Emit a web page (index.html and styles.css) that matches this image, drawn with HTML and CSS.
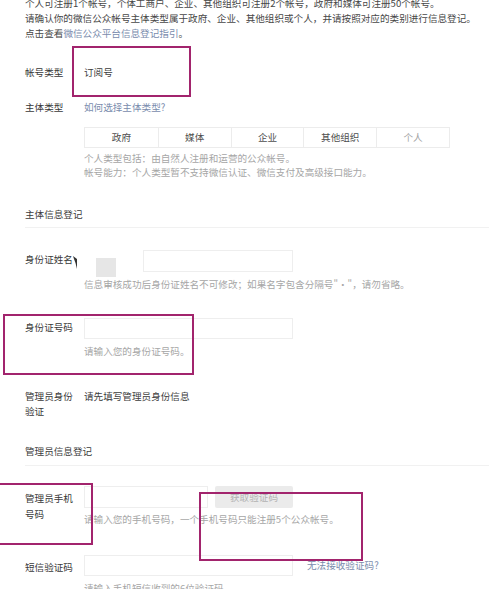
FILE: index.html
```html
<!DOCTYPE html>
<html lang="zh-CN">
<head>
<meta charset="utf-8">
<title>信息登记</title>
<link rel="stylesheet" href="styles.css">
</head>
<body>
<div class="page">
  <div class="intro">
    <p>个人可注册1个帐号，个体工商户、企业、其他组织可注册2个帐号，政府和媒体可注册50个帐号。</p>
    <p>请确认你的微信公众帐号主体类型属于政府、企业、其他组织或个人，并请按照对应的类别进行信息登记。</p>
    <p>点击查看<span class="link">微信公众平台信息登记指引</span>。</p>
  </div>

  <div class="row row-type">
    <div class="label">帐号类型</div>
    <div class="value">订阅号</div>
  </div>

  <div class="row row-subject">
    <div class="label">主体类型</div>
    <div class="field">
      <div class="value"><span class="link">如何选择主体类型?</span></div>
      <div class="tabs">
        <div class="tab">政府</div>
        <div class="tab">媒体</div>
        <div class="tab">企业</div>
        <div class="tab">其他组织</div>
        <div class="tab tab-light">个人</div>
      </div>
      <div class="hints">
        <div class="hint">个人类型包括：由自然人注册和运营的公众帐号。</div>
        <div class="hint">帐号能力：个人类型暂不支持微信认证、微信支付及高级接口能力。</div>
      </div>
    </div>
  </div>

  <div class="section-title title-1">主体信息登记</div>

  <div class="row row-name">
    <div class="label label-input">身份证姓名</div>
    <div class="field">
      <div class="input input-short"></div>
      <div class="hint hint-after">信息审核成功后身份证姓名不可修改；如果名字包含分隔号"·"，请勿省略。</div>
    </div>
  </div>

  <div class="row row-id">
    <div class="label label-input">身份证号码</div>
    <div class="field">
      <div class="input input-21"></div>
      <div class="hint hint-after">请输入您的身份证号码。</div>
    </div>
  </div>

  <div class="row row-verify">
    <div class="label">管理员身份<br>验证</div>
    <div class="value">请先填写管理员身份信息</div>
  </div>

  <div class="section-title title-2">管理员信息登记</div>

  <div class="row row-phone">
    <div class="label label-input2">管理员手机<br>号码</div>
    <div class="field">
      <div class="phone-line">
        <div class="input input-phone"></div>
        <div class="btn">获取验证码</div>
      </div>
      <div class="hint hint-after2">请输入您的手机号码，一个手机号码只能注册5个公众帐号。</div>
    </div>
  </div>

  <div class="row row-sms">
    <div class="label label-input2">短信验证码</div>
    <div class="field">
      <div class="sms-line">
        <div class="input input-21"></div>
        <span class="link sms-link">无法接收验证码?</span>
      </div>
      <div class="hint hint-after">请输入手机短信收到的6位验证码</div>
    </div>
  </div>
</div>

<div class="grey-square"></div>
<svg class="cursor-mark" width="6" height="14" viewBox="0 0 6 14"><polygon points="0,0 4,3 4,13 2.5,7 1,3" fill="#333"/></svg>

<div class="mark mark-1"></div>
<div class="mark mark-2"></div>
<div class="mark mark-3"></div>
<div class="mark mark-4"></div>
</body>
</html>
```

FILE: styles.css
```css
html, body {
  margin: 0;
  padding: 0;
  background: #ffffff;
}

body {
  font-family: "Noto Sans CJK SC", "Noto Sans", sans-serif;
  font-size: 9.6px;
  color: #3c3c3c;
  width: 489px;
  height: 589px;
  overflow: hidden;
  position: relative;
}

.page {
  padding-left: 25px;
}

.intro {
  margin-top: -4.5px;
  color: #474747;
}

.intro p {
  margin: 0;
  line-height: 15px;
  white-space: nowrap;
}

.link {
  color: #7a8cad;
}

.row {
  display: grid;
  grid-template-columns: 59px 1fr;
  align-items: start;
}

.label {
  line-height: 15px;
  color: #383838;
  white-space: nowrap;
}

.value {
  line-height: 15px;
  color: #3c3c3c;
  white-space: nowrap;
}

.row-type {
  margin-top: 24px;
}

.row-subject {
  margin-top: 20px;
}

.tabs {
  margin-top: 12px;
  width: 366px;
  height: 21px;
  box-sizing: border-box;
  border: 1px solid #ececec;
  display: grid;
  grid-template-columns: repeat(5, 1fr);
}

.tab {
  display: flex;
  align-items: center;
  justify-content: center;
  color: #4e4e4e;
  border-left: 1px solid #ececec;
}

.tab:first-child {
  border-left: none;
}

.tab-light {
  color: #a3a3a3;
}

.hints {
  margin-top: 3.5px;
}

.hint {
  line-height: 14px;
  color: #a6a6a6;
  white-space: nowrap;
}

.section-title {
  line-height: 15px;
  color: #3c3c3c;
  border-bottom: 1px solid #f1f1f1;
}

.title-1 {
  margin-top: 28px;
  padding-bottom: 5px;
}

.title-2 {
  margin-top: 25px;
  padding-bottom: 6px;
}

.input {
  box-sizing: border-box;
  width: 209px;
  height: 22px;
  border: 1px solid #eeeeee;
  background: #ffffff;
}

.input-21 {
  height: 21px;
}

.input-short {
  width: 150px;
  margin-left: 59px;
}

.label-input {
  padding-top: 2.5px;
}

.label-input2 {
  padding-top: 3.5px;
  line-height: 16px;
}

.hint-after {
  margin-top: 5px;
}

.hint-after2 {
  margin-top: 4px;
}

.row-name {
  margin-top: 21.5px;
}

.row-id {
  margin-top: 27px;
}

.row-verify {
  margin-top: 31px;
}

.row-phone {
  margin-top: 20.5px;
}

.row-sms {
  margin-top: 29px;
}

.phone-line,
.sms-line {
  display: flex;
  align-items: center;
}

.input-phone {
  width: 124px;
}

.btn {
  margin-left: 7px;
  width: 78px;
  height: 22px;
  border-radius: 2px;
  background: #ebebeb;
  color: #b3b3b3;
  display: flex;
  align-items: center;
  justify-content: center;
}

.sms-link {
  margin-left: 14px;
  line-height: 15px;
}

.grey-square {
  position: absolute;
  left: 96px;
  top: 258px;
  width: 20px;
  height: 19px;
  background: #e6e6e6;
}

.cursor-mark {
  position: absolute;
  left: 73px;
  top: 256px;
}

.mark {
  position: absolute;
  box-sizing: border-box;
  border: 2.5px solid #a2246d;
}

.mark-1 {
  left: 72px;
  top: 46px;
  width: 119px;
  height: 51px;
}

.mark-2 {
  left: 3px;
  top: 314px;
  width: 191px;
  height: 61px;
}

.mark-3 {
  left: -2px;
  top: 483px;
  width: 95px;
  height: 62px;
}

.mark-4 {
  left: 199px;
  top: 492px;
  width: 164px;
  height: 69px;
}
```
